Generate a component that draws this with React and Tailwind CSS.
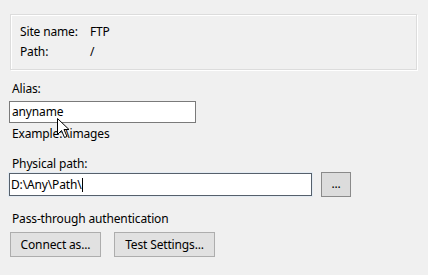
export default function App() {
  return (
    <div className="relative w-[428px] h-[275px] bg-[#f0f0f0] text-[12px] leading-[16px] tracking-[-0.15px] text-black font-['Noto_Sans',sans-serif] overflow-hidden">
      <div className="pt-[14px] pl-[10px]">
        <div className="w-[407px] h-[56px] border border-[#dcdcdc] shadow-[1px_1px_0_#ffffff,inset_1px_1px_0_#ffffff] pl-[9px] pt-[9px]">
          <div className="flex h-[20px]">
            <span className="w-[70px]">Site name:</span>
            <span>FTP</span>
          </div>
          <div className="flex h-[20px]">
            <span className="w-[70px]">Path:</span>
            <span>/</span>
          </div>
        </div>
      </div>

      <div className="mt-[11px] pl-[12px]">Alias:</div>
      <div className="mt-[4px] ml-[9px] w-[187px] h-[22px] bg-white border border-[#7a7a7a] pl-[2px] flex items-center">
        anyname
      </div>
      <div className="mt-[3px] pl-[12px]">Example: \images</div>

      <div className="mt-[14px] pl-[12px]">Physical path:</div>
      <div className="ml-[9px] flex items-center gap-[9px]">
        <div className="w-[303px] h-[23px] bg-white border border-[#56606b] shadow-[0_0_0_1px_#e3ebf3] pl-[1px] flex items-center">
          <span>D:\Any\Path\</span>
          <span className="inline-block w-px h-[14px] bg-black"></span>
        </div>
        <div className="w-[30px] h-[25px] bg-[#dcdcdc] border border-[#8a8a8a] flex items-center justify-center leading-none pb-[2px]">
          ...
        </div>
      </div>

      <div className="mt-[14px] pl-[12px]">Pass-through authentication</div>
      <div className="mt-[5px] ml-[10px] flex gap-[13px]">
        <div className="w-[91px] h-[25px] bg-[#e1e1e1] border border-[#adadad] flex items-center justify-center">
          Connect as...
        </div>
        <div className="w-[101px] h-[25px] bg-[#e1e1e1] border border-[#adadad] flex items-center justify-center">
          Test Settings...
        </div>
      </div>

      <svg className="absolute left-[57px] top-[118px]" width="14" height="22" viewBox="0 0 14 22">
        <polygon
          points="0.5,0.5 0.5,16.5 4.5,12.5 7.5,19.5 10,18.5 7,11.5 12,11.5"
          fill="#ffffff"
          stroke="#000000"
          strokeWidth="1"
          strokeLinejoin="miter"
        />
      </svg>
    </div>
  );
}
